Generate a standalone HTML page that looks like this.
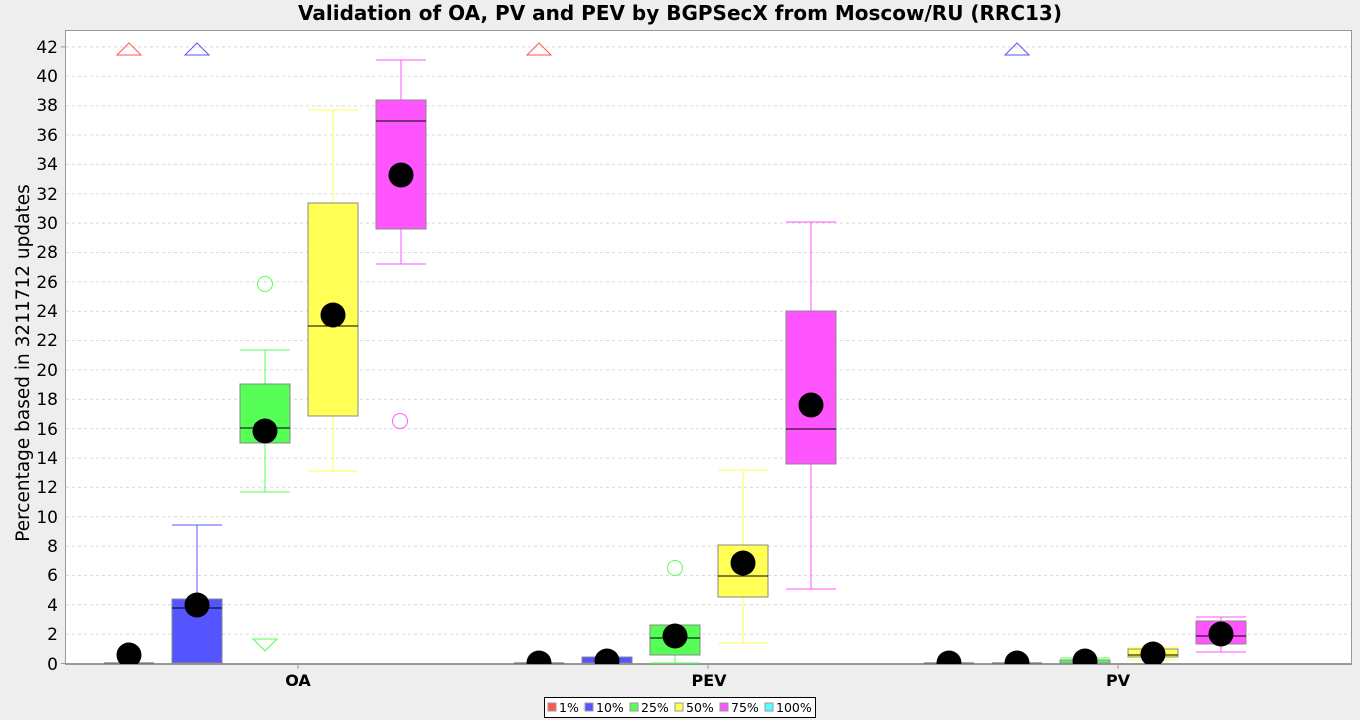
<!DOCTYPE html>
<html><head><meta charset="utf-8"><style>
html,body{margin:0;padding:0;background:#eeeeee;}
svg{display:block;}
text{font-family:"DejaVu Sans","Liberation Sans",sans-serif;}
</style></head><body>
<svg width="1360" height="720" viewBox="0 0 1360 720" xmlns="http://www.w3.org/2000/svg">
<rect width="1360" height="720" fill="#eeeeee"/>
<text x="680" y="20" text-anchor="middle" font-size="20" font-weight="bold">Validation of OA, PV and PEV by BGPSecX from Moscow/RU (RRC13)</text>
<rect x="65.5" y="30.5" width="1286" height="633" fill="#fff" stroke="#999"/>
<g stroke="#d8d8d8" stroke-dasharray="3,3" stroke-width="1">
<line x1="66" x2="1351" y1="634.1" y2="634.1"/><line x1="66" x2="1351" y1="604.8" y2="604.8"/>
<line x1="66" x2="1351" y1="575.4" y2="575.4"/><line x1="66" x2="1351" y1="546.1" y2="546.1"/>
<line x1="66" x2="1351" y1="516.7" y2="516.7"/><line x1="66" x2="1351" y1="487.3" y2="487.3"/>
<line x1="66" x2="1351" y1="458" y2="458"/><line x1="66" x2="1351" y1="428.6" y2="428.6"/>
<line x1="66" x2="1351" y1="399.3" y2="399.3"/><line x1="66" x2="1351" y1="369.9" y2="369.9"/>
<line x1="66" x2="1351" y1="340.5" y2="340.5"/><line x1="66" x2="1351" y1="311.2" y2="311.2"/>
<line x1="66" x2="1351" y1="281.8" y2="281.8"/><line x1="66" x2="1351" y1="252.5" y2="252.5"/>
<line x1="66" x2="1351" y1="223.1" y2="223.1"/><line x1="66" x2="1351" y1="193.7" y2="193.7"/>
<line x1="66" x2="1351" y1="164.4" y2="164.4"/><line x1="66" x2="1351" y1="135" y2="135"/>
<line x1="66" x2="1351" y1="105.7" y2="105.7"/><line x1="66" x2="1351" y1="76.3" y2="76.3"/>
<line x1="66" x2="1351" y1="46.9" y2="46.9"/>
</g>
<g stroke="#999"><line x1="61" x2="65" y1="663.5" y2="663.5"/><line x1="61" x2="65" y1="46.9" y2="46.9"/></g>
<text transform="translate(29,363) rotate(-90)" text-anchor="middle" font-size="18.5">Percentage based in 3211712 updates</text>

<!-- OA -->
<line x1="104" x2="154" y1="663" y2="663" stroke="#555"/>
<polygon points="129,43 117,55 141,55" fill="none" stroke="#ff5555"/>
<g stroke="#5555ff"><line x1="197" x2="197" y1="525" y2="599"/><line x1="172" x2="222" y1="525" y2="525"/></g>
<rect x="172" y="599" width="50" height="64" fill="#5555ff" stroke="#888"/>
<line x1="172" x2="222" y1="608" y2="608" stroke="#000"/>
<polygon points="197,43 185,55 209,55" fill="none" stroke="#5555ff"/>
<g stroke="#55ff55"><line x1="265" x2="265" y1="350" y2="384"/><line x1="265" x2="265" y1="443" y2="492"/><line x1="240" x2="290" y1="350" y2="350"/><line x1="240" x2="290" y1="492" y2="492"/></g>
<rect x="240" y="384" width="50" height="59" fill="#55ff55" stroke="#888"/>
<line x1="240" x2="290" y1="428" y2="428" stroke="#000"/>
<circle cx="265" cy="284" r="7.5" fill="none" stroke="#55ff55"/>
<polygon points="253,639 277,639 265,651" fill="none" stroke="#55ff55"/>
<g stroke="#ffff55"><line x1="333" x2="333" y1="110" y2="203"/><line x1="333" x2="333" y1="416" y2="471"/><line x1="308" x2="358" y1="110" y2="110"/><line x1="308" x2="358" y1="471" y2="471"/></g>
<rect x="308" y="203" width="50" height="213" fill="#ffff55" stroke="#888"/>
<line x1="308" x2="358" y1="326" y2="326" stroke="#000"/>
<g stroke="#ff55ff"><line x1="401" x2="401" y1="60" y2="100"/><line x1="401" x2="401" y1="229" y2="264"/><line x1="376" x2="426" y1="60" y2="60"/><line x1="376" x2="426" y1="264" y2="264"/></g>
<rect x="376" y="100" width="50" height="129" fill="#ff55ff" stroke="#888"/>
<line x1="376" x2="426" y1="121" y2="121" stroke="#000"/>
<circle cx="400" cy="421" r="7.5" fill="none" stroke="#ff55ff"/>

<!-- PEV -->
<line x1="514" x2="564" y1="663" y2="663" stroke="#555"/>
<polygon points="539,43 527,55 551,55" fill="none" stroke="#ff5555"/>
<rect x="582" y="657" width="50" height="6" fill="#5555ff" stroke="#888"/>
<g stroke="#55ff55"><line x1="675" x2="675" y1="655" y2="663"/><line x1="650" x2="700" y1="663" y2="663"/></g>
<rect x="650" y="625" width="50" height="30" fill="#55ff55" stroke="#888"/>
<line x1="650" x2="700" y1="638" y2="638" stroke="#000"/>
<circle cx="675" cy="568" r="7.5" fill="none" stroke="#55ff55"/>
<g stroke="#ffff55"><line x1="743" x2="743" y1="470" y2="545"/><line x1="743" x2="743" y1="597" y2="643"/><line x1="718" x2="768" y1="470" y2="470"/><line x1="718" x2="768" y1="643" y2="643"/></g>
<rect x="718" y="545" width="50" height="52" fill="#ffff55" stroke="#888"/>
<line x1="718" x2="768" y1="576" y2="576" stroke="#000"/>
<g stroke="#ff55ff"><line x1="811" x2="811" y1="222" y2="311"/><line x1="811" x2="811" y1="464" y2="589"/><line x1="786" x2="836" y1="222" y2="222"/><line x1="786" x2="836" y1="589" y2="589"/></g>
<rect x="786" y="311" width="50" height="153" fill="#ff55ff" stroke="#888"/>
<line x1="786" x2="836" y1="429" y2="429" stroke="#000"/>

<!-- PV -->
<line x1="924" x2="974" y1="663" y2="663" stroke="#555"/>
<line x1="992" x2="1042" y1="663" y2="663" stroke="#555"/>
<polygon points="1017,43 1005,55 1029,55" fill="none" stroke="#5555ff"/>
<line x1="1060" x2="1110" y1="658" y2="658" stroke="#55ff55"/>
<rect x="1060" y="660" width="50" height="3" fill="#55ff55" stroke="#888"/>
<g stroke="#ffff55"><line x1="1128" x2="1178" y1="647" y2="647"/><line x1="1128" x2="1178" y1="660" y2="660"/></g>
<rect x="1128" y="649" width="50" height="8" fill="#ffff55" stroke="#888"/>
<line x1="1128" x2="1178" y1="655" y2="655" stroke="#000"/>
<g stroke="#ff55ff"><line x1="1221" x2="1221" y1="617" y2="652"/><line x1="1196" x2="1246" y1="617" y2="617"/><line x1="1196" x2="1246" y1="652" y2="652"/></g>
<rect x="1196" y="621" width="50" height="23" fill="#ff55ff" stroke="#888"/>
<line x1="1196" x2="1246" y1="636" y2="636" stroke="#000"/>

<g fill="#000">
<circle cx="129" cy="655" r="12.5"/><circle cx="197" cy="605" r="12.5"/><circle cx="265" cy="431" r="12.5"/>
<circle cx="333" cy="315" r="12.5"/><circle cx="401" cy="175" r="12.5"/>
<circle cx="539" cy="663" r="12.5"/><circle cx="607" cy="661" r="12.5"/><circle cx="675" cy="636" r="12.5"/>
<circle cx="743" cy="563" r="12.5"/><circle cx="811" cy="405" r="12.5"/>
<circle cx="949" cy="663" r="12.5"/><circle cx="1017" cy="663" r="12.5"/><circle cx="1085" cy="661" r="12.5"/>
<circle cx="1153" cy="654" r="12.5"/><circle cx="1221" cy="634" r="12.5"/>
</g>
<rect x="0" y="665" width="1360" height="55" fill="#eeeeee"/>
<line x1="65" x2="1352" y1="664.5" y2="664.5" stroke="#999"/>
<g stroke="#999"><line x1="298" x2="298" y1="665" y2="669"/><line x1="708" x2="708" y1="665" y2="669"/><line x1="1118" x2="1118" y1="665" y2="669"/></g>
<g font-size="17" text-anchor="end">
<text x="58" y="670">0</text><text x="58" y="640">2</text><text x="58" y="611">4</text>
<text x="58" y="581">6</text><text x="58" y="552">8</text><text x="58" y="523">10</text>
<text x="58" y="493">12</text><text x="58" y="464">14</text><text x="58" y="435">16</text>
<text x="58" y="405">18</text><text x="58" y="376">20</text><text x="58" y="346">22</text>
<text x="58" y="317">24</text><text x="58" y="288">26</text><text x="58" y="258">28</text>
<text x="58" y="229">30</text><text x="58" y="200">32</text><text x="58" y="170">34</text>
<text x="58" y="141">36</text><text x="58" y="111">38</text><text x="58" y="82">40</text>
<text x="58" y="53">42</text>
</g>
<g font-size="16" font-weight="bold" text-anchor="middle">
<text x="298" y="686">OA</text><text x="709" y="686">PEV</text><text x="1118" y="686">PV</text>
</g>
<rect x="544.5" y="697.5" width="271" height="20" fill="#fff" stroke="#000"/>
<g stroke="#999">
<rect x="548" y="703" width="8" height="8" fill="#ff5555"/>
<rect x="585" y="703" width="8" height="8" fill="#5555ff"/>
<rect x="630" y="703" width="8" height="8" fill="#55ff55"/>
<rect x="675" y="703" width="8" height="8" fill="#ffff55"/>
<rect x="720" y="703" width="8" height="8" fill="#ff55ff"/>
<rect x="765" y="703" width="8" height="8" fill="#55ffff"/>
</g>
<g font-size="12.5">
<text x="559" y="712">1%</text><text x="596" y="712">10%</text><text x="641" y="712">25%</text>
<text x="686" y="712">50%</text><text x="731" y="712">75%</text><text x="776" y="712">100%</text>
</g>
</svg>
</body></html>
